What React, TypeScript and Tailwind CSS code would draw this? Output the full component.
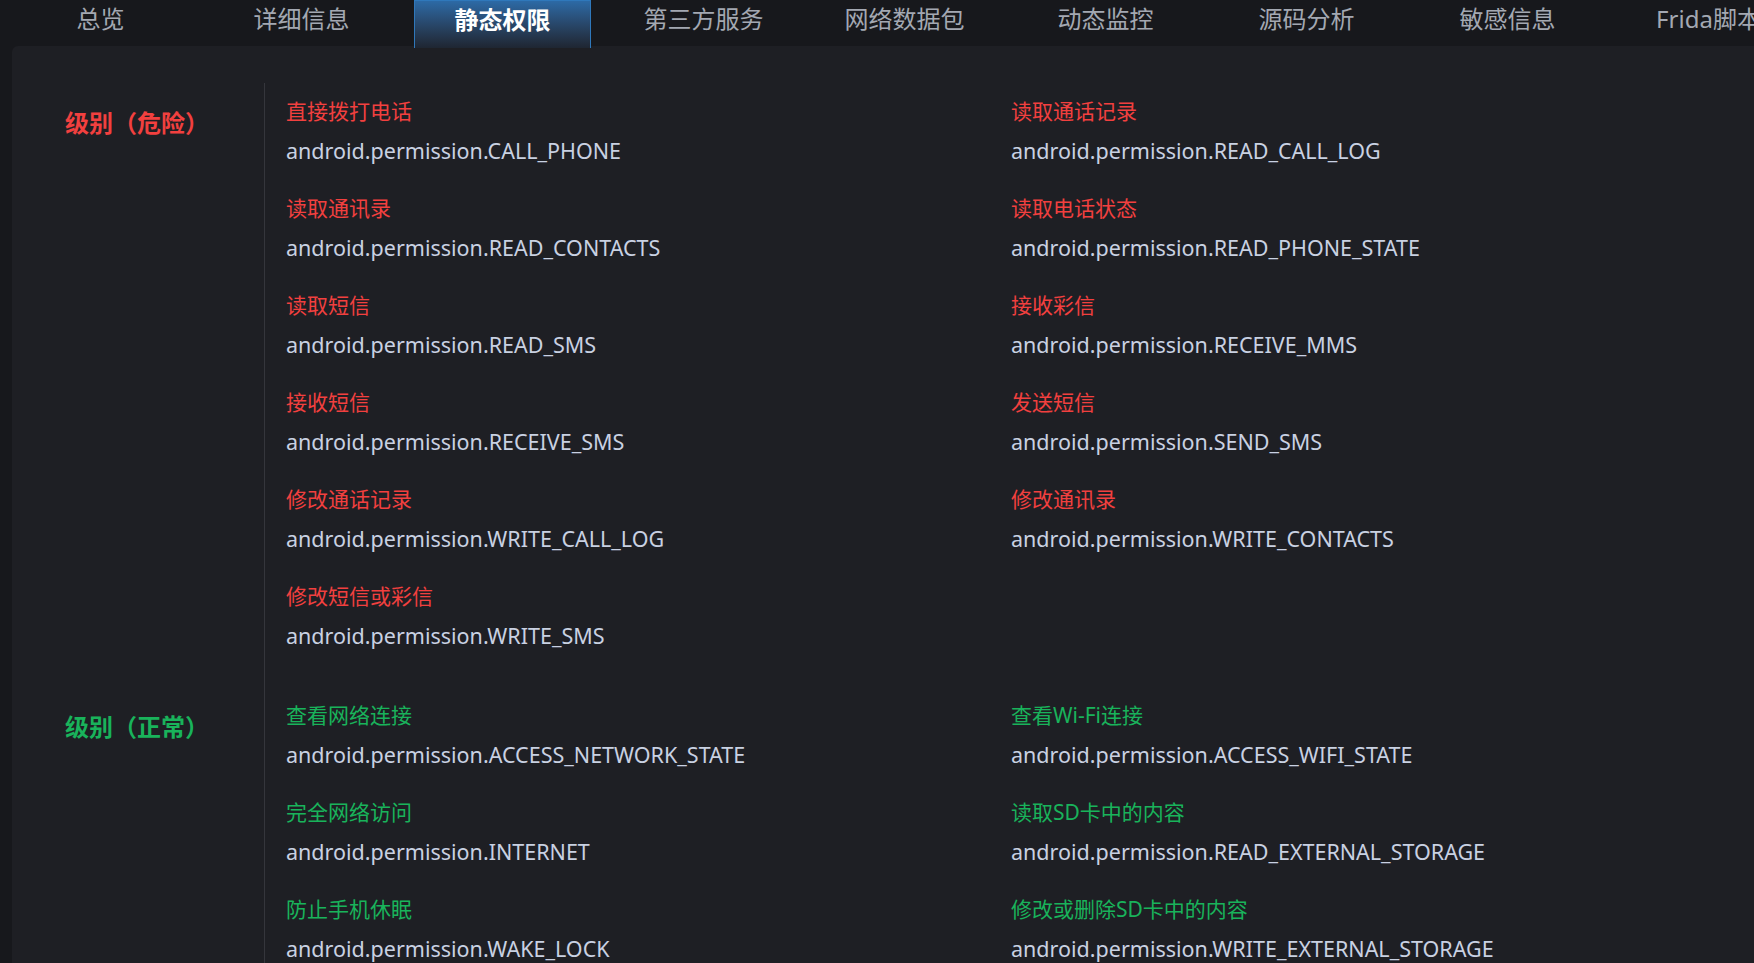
import React from "react";

const tabs = [
  "总览",
  "详细信息",
  "静态权限",
  "第三方服务",
  "网络数据包",
  "动态监控",
  "源码分析",
  "敏感信息",
  "Frida脚本",
];

const danger: [string, string][] = [
  ["直接拨打电话", "android.permission.CALL_PHONE"],
  ["读取通话记录", "android.permission.READ_CALL_LOG"],
  ["读取通讯录", "android.permission.READ_CONTACTS"],
  ["读取电话状态", "android.permission.READ_PHONE_STATE"],
  ["读取短信", "android.permission.READ_SMS"],
  ["接收彩信", "android.permission.RECEIVE_MMS"],
  ["接收短信", "android.permission.RECEIVE_SMS"],
  ["发送短信", "android.permission.SEND_SMS"],
  ["修改通话记录", "android.permission.WRITE_CALL_LOG"],
  ["修改通讯录", "android.permission.WRITE_CONTACTS"],
  ["修改短信或彩信", "android.permission.WRITE_SMS"],
];

const normal: [string, string][] = [
  ["查看网络连接", "android.permission.ACCESS_NETWORK_STATE"],
  ["查看Wi-Fi连接", "android.permission.ACCESS_WIFI_STATE"],
  ["完全网络访问", "android.permission.INTERNET"],
  ["读取SD卡中的内容", "android.permission.READ_EXTERNAL_STORAGE"],
  ["防止手机休眠", "android.permission.WAKE_LOCK"],
  ["修改或删除SD卡中的内容", "android.permission.WRITE_EXTERNAL_STORAGE"],
];

function Section({
  label,
  items,
  color,
}: {
  label: string;
  items: [string, string][];
  color: "red" | "green";
}) {
  const titleColor = color === "red" ? "text-[#f2403f]" : "text-[#19b35b]";
  return (
    <div className="flex">
      <div className="w-[252px] shrink-0 pl-[53px] pt-[25px]">
        <div className={`text-[24px] leading-[30px] font-bold ${titleColor}`}>{label}</div>
      </div>
      <div className="flex-1 border-l border-[#35363c] pt-[12px] pb-[27px] pl-[21px]">
        <div className="grid grid-cols-[725px_1fr] gap-y-[17px]">
          {items.map(([title, perm]) => (
            <div key={perm} className="h-[80px]">
              <div className={`text-[21px] leading-[32px] ${titleColor}`}>{title}</div>
              <div className="text-[21.5px] leading-[48px] text-[#c9d1e2]">{perm}</div>
            </div>
          ))}
        </div>
      </div>
    </div>
  );
}

export default function App() {
  return (
    <div
      className="h-[963px] w-full overflow-hidden bg-[#17181c]"
      style={{ fontFamily: '"Noto Sans", "Noto Sans CJK SC", sans-serif' }}
    >
      {/* Tabs */}
      <div className="flex h-[46px] items-start gap-[24px] pl-[12px] whitespace-nowrap">
        {tabs.map((t) => {
          const active = t === "静态权限";
          return (
            <div
              key={t}
              className={
                active
                  ? "relative z-10 h-[48px] w-[177px] shrink-0 border-x border-t border-[#2f78bb] bg-gradient-to-b from-[#2c6aa6] to-[#1f2632] pt-[3px] text-center text-[24px] leading-[32px] font-bold text-white"
                  : "h-[46px] w-[177px] shrink-0 pt-[3px] text-center text-[24px] leading-[32px] text-[#a3a8b2]"
              }
            >
              {t}
            </div>
          );
        })}
      </div>

      {/* Content card */}
      <div className="ml-[12px] min-h-[917px] rounded-tl-[6px] bg-[#1e1f24] pt-[37px]">
        <Section label="级别（危险）" items={danger} color="red" />
        <Section label="级别（正常）" items={normal} color="green" />
      </div>
    </div>
  );
}
